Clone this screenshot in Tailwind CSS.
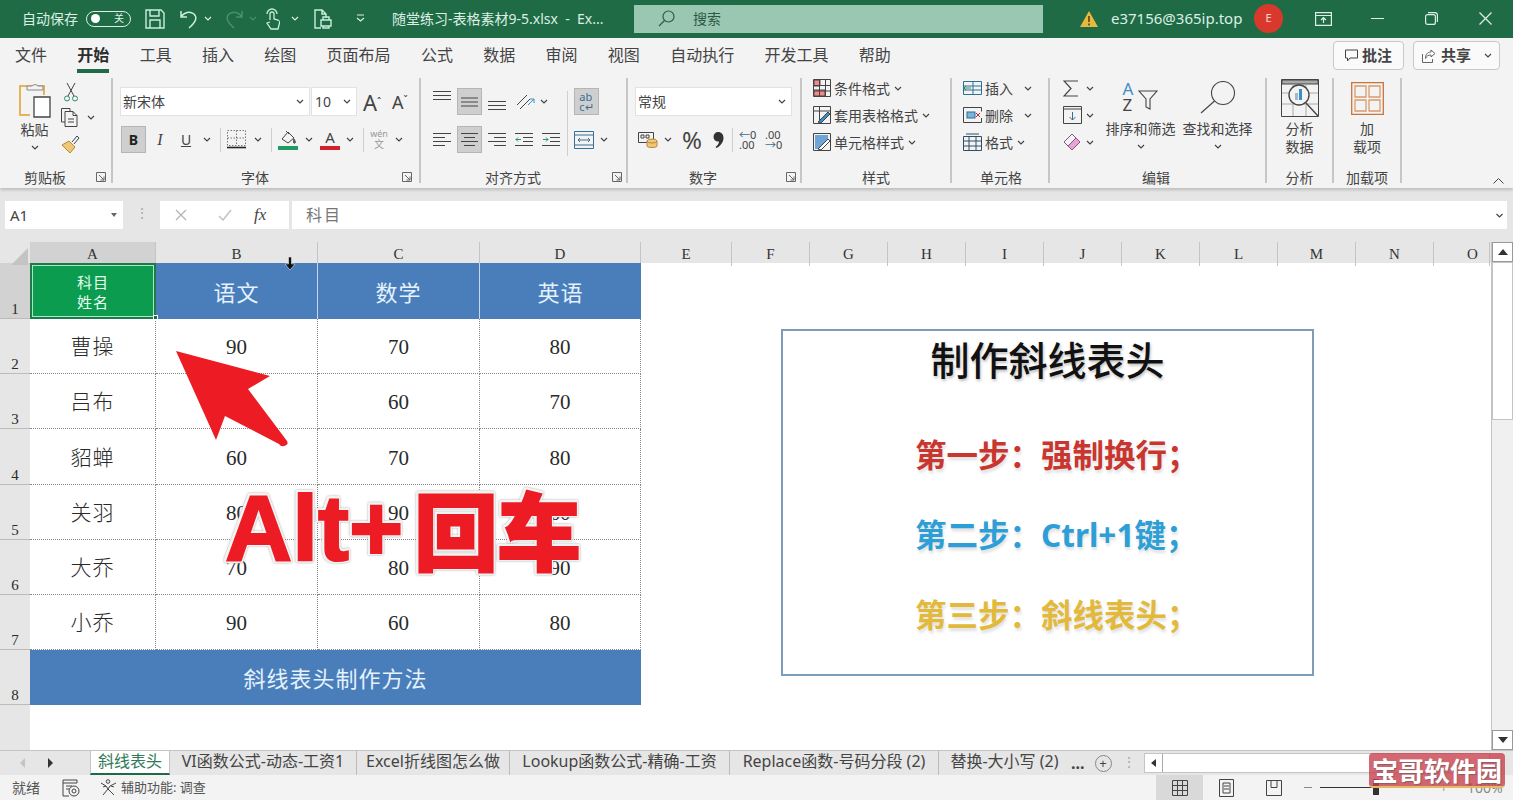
<!DOCTYPE html>
<html lang="zh-CN">
<head>
<meta charset="UTF-8" />
<title>随堂练习-表格素材9-5.xlsx - Excel</title>
<script src="https://cdn.jsdelivr.net/npm/@tailwindcss/browser@4"></script>
</head>
<body class="overflow-hidden bg-white">
<svg class="hidden">
  <symbol id="c" viewBox="0 0 8 5"><path d="M1 1l3 3 3-3" fill="none" stroke="#444" stroke-width="1.2"/></symbol>
  <symbol id="launch" viewBox="0 0 10 10"><path d="M.5 9.500V.5h9v9z M3 3l5 5 M8 4.500V8H4.500" fill="none" stroke="#666"/></symbol>
</svg>

<div class="relative flex h-[800px] w-[1513px] flex-col overflow-hidden bg-[#e6e6e6] font-['Noto_Sans','Noto_Sans_CJK_SC',sans-serif] text-[#444]">

  <!-- title bar -->
  <header class="flex h-[38px] shrink-0 items-center bg-[#1f6b45] pb-[1px] text-[#dcefe5]">
    <span class="ml-[22px] w-[64px] text-[14px]">自动保存</span>
    <span class="flex h-[16px] w-[45px] items-center justify-between rounded-full border border-[#dcefe5] pr-[6px] pl-[4px] text-[10px]"><i class="size-[9px] rounded-full bg-white"></i>关</span>
    <svg class="ml-[14px] size-[20px]" viewBox="0 0 20 20" fill="none" stroke="#c8eedd" stroke-width="1.4"><path d="M1 1h15l3 3v15H1z M5 1v6h9V1 M5 19v-8h10v8"/></svg>
    <svg class="ml-[15px] h-[20px] w-[18px]" viewBox="0 0 18 20" fill="none" stroke="#c8eedd" stroke-width="1.5"><path d="M1 2v6h6 M1 8c3-5 9-6 13-3 3 3 3 7-5 14"/></svg>
    <svg class="ml-[6px] h-[5px] w-[8px]" viewBox="0 0 8 5" fill="none" stroke="#dcefe5" stroke-width="1.2"><path d="M1 1l3 3 3-3"/></svg>
    <svg class="ml-[13px] h-[20px] w-[18px]" viewBox="0 0 18 20" fill="none" stroke="#4b8d6d" stroke-width="1.5"><path d="M17 2v6h-6 M17 8c-3-5-9-6-13-3-3 3-3 7 5 14"/></svg>
    <svg class="ml-[6px] h-[5px] w-[8px]" viewBox="0 0 8 5" fill="none" stroke="#4b8d6d" stroke-width="1.2"><path d="M1 1l3 3 3-3"/></svg>
    <svg class="ml-[8px] h-[22px] w-[16px]" viewBox="0 0 16 22" fill="none" stroke="#c8eedd" stroke-width="1.3"><path d="M5 12V6a2 2 0 0 1 4 0v5l4 1c2 1 2 2 1 5l-1 4H6l-4-6 3-1 M2 6a5 5 0 0 1 10 0"/></svg>
    <svg class="ml-[10px] h-[5px] w-[8px]" viewBox="0 0 8 5" fill="none" stroke="#dcefe5" stroke-width="1.2"><path d="M1 1l3 3 3-3"/></svg>
    <svg class="ml-[15px] h-[20px] w-[18px]" viewBox="0 0 18 20" fill="none" stroke="#c8eedd" stroke-width="1.4"><path d="M7 19H1V1h7l4 4v4 M8 1v4h4 M7 11h10v6H7z M9 11V8h6v3 M9 17v2h6v-2"/></svg>
    <svg class="ml-[24px] h-[9px] w-[9px]" viewBox="0 0 9 9" fill="none" stroke="#dcefe5" stroke-width="1.2"><path d="M1 1h7 M1 4l3.500 3L8 4"/></svg>
    <span class="ml-[27px] w-[242px] text-[14px] whitespace-nowrap">随堂练习-表格素材9-5.xlsx &nbsp;-&nbsp; Ex...</span>
    <div class="flex h-[28px] w-[409px] items-center bg-[#9ac7b1] text-[#2c5a44]">
      <svg class="ml-[24px] size-[17px]" viewBox="0 0 17 17" fill="none" stroke="#2c5a44" stroke-width="1.2"><circle cx="10.500" cy="6.500" r="5.500"/><path d="M6.500 10.500L1 16"/></svg>
      <span class="ml-[18px] text-[14px]">搜索</span>
    </div>
    <svg class="ml-[37px] h-[16px] w-[18px]" viewBox="0 0 18 16"><path d="M9 0l9 16H0z" fill="#e8b93d"/><path d="M9 5v6 M9 12.500v2" stroke="#5a4310" stroke-width="1.6"/></svg>
    <span class="ml-[13px] w-[143px] text-[15px] whitespace-nowrap">e37156@365ip.top</span>
    <span class="flex size-[29px] items-center justify-center rounded-full bg-[#d9392c] text-[11px] text-[#f6d5c8]">E</span>
    <svg class="ml-[32px] h-[14px] w-[17px]" viewBox="0 0 17 14" fill="none" stroke="#dcefe5" stroke-width="1.2"><path d="M.6.600h15.800v12.800H.6z M.6 3.500h15.800 M8.500 11V6 M6 8l2.500-2.500L11 8"/></svg>
    <span class="ml-[39px] h-[1.500px] w-[13px] bg-[#dcefe5]"></span>
    <svg class="ml-[41px] size-[13px]" viewBox="0 0 13 13" fill="none" stroke="#dcefe5" stroke-width="1.200"><rect x=".6" y="2.600" width="9.800" height="9.800" rx="2"/><path d="M3 .6h7a2.500 2.500 0 0 1 2.400 2.400v7"/></svg>
    <svg class="ml-[41px] size-[13px]" viewBox="0 0 13 13" fill="none" stroke="#dcefe5" stroke-width="1.300"><path d="M.5.500l12 12 M12.500.500l-12 12"/></svg>
  </header>

  <!-- ribbon tabs -->
  <nav class="relative flex h-[34px] shrink-0 items-center gap-[30.300px] bg-[#f3f3f3] pl-[15px] text-[16px] text-[#444]">
    <span>文件</span>
    <span class="relative font-bold text-[#2d2d2d]">开始<i class="absolute -bottom-[6px] left-0 h-[4px] w-[32px] bg-[#1f6b45]"></i></span>
    <span>工具</span><span>插入</span><span>绘图</span><span>页面布局</span><span>公式</span><span>数据</span><span>审阅</span><span>视图</span><span>自动执行</span><span>开发工具</span><span>帮助</span>
    <div class="absolute top-[3px] right-[109px] flex h-[29px] w-[71px] items-center justify-center gap-[4px] rounded-[4px] border border-[#c8c8c8] bg-[#fafafa] font-bold text-[15px]">
      <svg class="size-[13px]" viewBox="0 0 13 13" fill="none" stroke="#444" stroke-width="1"><path d="M.5 1h12v8H5l-2.500 3V9h-2z"/></svg>批注
    </div>
    <div class="absolute top-[3px] right-[13px] flex h-[29px] w-[87px] items-center gap-[5px] rounded-[4px] border border-[#c8c8c8] bg-[#fafafa] pl-[8px] font-bold text-[15px]">
      <svg class="size-[14px]" viewBox="0 0 14 14" fill="none" stroke="#666" stroke-width="1"><path d="M9 1l4 3.500L9 8V6C6 6 4.500 7 3.500 9.500 3.500 6 5 3 9 3z M.5 5v8.500h10V10"/></svg>共享
      <svg class="ml-[8px] h-[5px] w-[8px]"><use href="#c"/></svg>
    </div>
  </nav>

  <!-- ribbon -->
  <section class="flex h-[116px] shrink-0 bg-[#f3f3f3] text-[14px] shadow-[0_2px_3px_rgba(0,0,0,.18)]">

    <!-- clipboard -->
    <div class="flex w-[111px] flex-col">
      <div class="flex h-[94px]">
        <div class="ml-[18px] flex w-[33px] flex-col items-center pt-[10px]">
          <svg class="h-[36px] w-[34px]" viewBox="0 0 34 36" fill="none"><path d="M14 4H2v29h10" stroke="#e5b35a" stroke-width="2"/><path d="M14 4h12v9" stroke="#e5b35a" stroke-width="2"/><path d="M9 8V4h5a4 4 0 0 1 6 0h5v4z" stroke="#888" fill="#f3f3f3"/><path d="M16 15h16v20H16z" stroke="#444" fill="#fff" stroke-width="1.300"/></svg>
          <span class="mt-[2px] text-[14px] leading-[20px]">粘贴</span>
          <svg class="mt-[5px] h-[5px] w-[8px]"><use href="#c"/></svg>
        </div>
        <div class="ml-[10px] flex flex-col pt-[10px]">
          <svg class="ml-[3px] h-[20px] w-[14px]" viewBox="0 0 14 20" fill="none" stroke="#444"><path d="M3 1l7 13 M11 1L4 14"/><circle cx="3" cy="16.500" r="2.500" stroke="#2f8f6b"/><circle cx="11" cy="16.500" r="2.500" stroke="#2f8f6b"/></svg>
          <div class="mt-[6px] flex items-center">
            <svg class="h-[19px] w-[20px]" viewBox="0 0 20 19" fill="none" stroke="#444"><path d="M4 14H.5V.5H9v3 M4 3.500h8l4 4v11H4z M12 3.500v4h4 M7 11h6 M7 14h6"/></svg>
            <svg class="ml-[6px] h-[5px] w-[8px]"><use href="#c"/></svg>
          </div>
          <svg class="mt-[7px] h-[20px] w-[20px]" viewBox="0 0 20 20" fill="none"><path d="M1 11l7-4 6 6-5 6z" fill="#f0c677" stroke="#b58a36"/><path d="M11 8l5-6 2 2-5 6" stroke="#444"/></svg>
        </div>
      </div>
      <div class="flex h-[22px] items-center text-[#444]"><span class="ml-[24px] w-[72px]">剪贴板</span><svg class="size-[10px]"><use href="#launch"/></svg></div>
    </div>
    <i class="mt-[6px] h-[105px] w-[2px] bg-[#c6c6c6]"></i>

    <!-- font -->
    <div class="flex w-[306px] flex-col">
      <div class="h-[94px] pt-[16px] pl-[8px]">
        <div class="flex h-[27px] items-center">
          <div class="flex h-[27px] w-[188px] items-center justify-between bg-white pr-[5px] pl-[2px] shadow-[0_0_0_1px_#e2e2e2]">新宋体<svg class="h-[5px] w-[8px]"><use href="#c"/></svg></div>
          <div class="ml-[3px] flex h-[27px] w-[44px] items-center justify-between bg-white pr-[5px] pl-[3px] shadow-[0_0_0_1px_#e2e2e2]">10<svg class="h-[5px] w-[8px]"><use href="#c"/></svg></div>
          <span class="ml-[7px] w-[29px] text-[22px] leading-none">A<sup class="text-[10px]">ˆ</sup></span>
          <span class="w-[20px] text-[18px] leading-none">A<sup class="text-[10px]">ˇ</sup></span>
        </div>
        <div class="mt-[11px] flex h-[27px] items-center">
          <span class="flex h-[27px] w-[25px] items-center justify-center border border-[#b5b5b5] bg-[#cfcfcf] font-bold text-[#222]">B</span>
          <span class="w-[28px] text-center font-['Liberation_Serif'] text-[16px] italic">I</span>
          <span class="w-[24px] text-center underline">U</span>
          <span class="flex w-[18px] justify-center"><svg class="h-[5px] w-[8px]"><use href="#c"/></svg></span>
          <i class="mr-[6px] ml-[4px] h-[24px] w-px bg-[#cfcfcf]"></i>
          <svg class="size-[19px]" viewBox="0 0 19 19" fill="none"><path d="M.5.500h18v15H.5z M9.500.500v15 M.500 8h18" stroke="#777" stroke-dasharray="1.500 1.500"/><path d="M0 17.500h19" stroke="#222" stroke-width="1.600"/></svg>
          <span class="flex w-[21px] justify-center"><svg class="ml-[2px] h-[5px] w-[8px]"><use href="#c"/></svg></span>
          <i class="mr-[6px] ml-[4px] h-[24px] w-px bg-[#cfcfcf]"></i>
          <div class="flex w-[20px] flex-col items-center">
            <svg class="h-[15px] w-[18px]" viewBox="0 0 18 15" fill="none" stroke="#444"><path d="M3 9l6-7 6 6-6 5z M7 1l3 3"/><path d="M15 9c1 2 2 3 1 4s-2 0-1-4" fill="#2f8f6b"/></svg>
            <i class="mt-[1px] h-[4px] w-[20px] bg-[#1f9a63]"></i>
          </div>
          <span class="flex w-[20px] justify-center"><svg class="ml-[2px] h-[5px] w-[8px]"><use href="#c"/></svg></span>
          <div class="ml-[2px] flex w-[20px] flex-col items-center">
            <span class="text-[15px] leading-[15px]">A</span>
            <i class="mt-[1px] h-[4px] w-[20px] bg-[#d0222c]"></i>
          </div>
          <span class="flex w-[20px] justify-center"><svg class="h-[5px] w-[8px]"><use href="#c"/></svg></span>
          <i class="mr-[6px] ml-[3px] h-[24px] w-px bg-[#cfcfcf]"></i>
          <div class="flex w-[18px] flex-col items-center text-[#999]"><span class="text-[9px] leading-[10px]">wén</span><span class="text-[10px] leading-[11px]">文</span></div>
          <span class="flex w-[20px] justify-center"><svg class="ml-[2px] h-[5px] w-[8px]"><use href="#c"/></svg></span>
        </div>
      </div>
      <div class="flex h-[22px] items-center"><span class="ml-[128px] w-[157px]">字体</span><svg class="ml-[4px] size-[10px]"><use href="#launch"/></svg></div>
    </div>
    <i class="mt-[6px] h-[105px] w-[2px] bg-[#c6c6c6]"></i>

    <!-- alignment -->
    <div class="flex w-[205px] flex-col">
      <div class="flex h-[94px] pt-[16px]">
        <div class="w-[146px]">
          <div class="flex h-[27px] items-center pl-[12px]">
            <svg class="h-[14px] w-[18px] self-start mt-[2px]" viewBox="0 0 18 14" stroke="#444"><path d="M0 1.500h18 M0 5.500h18 M0 9.500h18"/></svg>
            <span class="mx-[6px] flex h-[27px] w-[25px] items-center justify-center border border-[#b5b5b5] bg-[#cfcfcf]"><svg class="h-[12px] w-[17px]" viewBox="0 0 17 12" stroke="#444"><path d="M0 2h17 M0 6h17 M0 10h17"/></svg></span>
            <svg class="mt-[4px] h-[14px] w-[18px]" viewBox="0 0 18 14" stroke="#444"><path d="M0 4.500h18 M0 8.500h18 M0 12.500h18"/></svg>
            <svg class="ml-[10px] h-[18px] w-[20px]" viewBox="0 0 20 18" fill="none" stroke="#444"><path d="M1 12L11 2 M4 16L14 6"/><path d="M12 12l6-6 M14 6h4v4" stroke="#3b8fc4"/></svg>
            <svg class="ml-[4px] h-[5px] w-[8px]"><use href="#c"/></svg>
          </div>
          <div class="mt-[11px] flex h-[27px] items-center pl-[12px]">
            <svg class="h-[16px] w-[18px]" viewBox="0 0 18 16" stroke="#444"><path d="M0 1.500h18 M0 5.500h12 M0 9.500h18 M0 13.500h12"/></svg>
            <span class="mx-[6px] flex h-[27px] w-[25px] items-center justify-center border border-[#b5b5b5] bg-[#cfcfcf]"><svg class="h-[16px] w-[17px]" viewBox="0 0 17 16" stroke="#444"><path d="M0 1.500h17 M3 5.500h11 M0 9.500h17 M3 13.500h11"/></svg></span>
            <svg class="h-[16px] w-[18px]" viewBox="0 0 18 16" stroke="#444"><path d="M0 1.500h18 M6 5.500h12 M0 9.500h18 M6 13.500h12"/></svg>
            <svg class="ml-[9px] h-[16px] w-[18px]" viewBox="0 0 18 16" fill="none" stroke="#444"><path d="M0 1.500h18 M8 5.500h10 M8 9.500h10 M0 13.500h18"/><path d="M6 7.500H1 M3 5.500l-2 2 2 2" stroke="#2f8f6b"/></svg>
            <svg class="ml-[9px] h-[16px] w-[18px]" viewBox="0 0 18 16" fill="none" stroke="#444"><path d="M0 1.500h18 M8 5.500h10 M8 9.500h10 M0 13.500h18"/><path d="M1 7.500h5 M4 5.500l2 2-2 2" stroke="#2f8f6b"/></svg>
          </div>
        </div>
        <i class="mt-[3px] h-[65px] w-px bg-[#cfcfcf]"></i>
        <div class="flex flex-col pl-[6px]">
          <span class="flex h-[27px] w-[25px] flex-col items-center justify-center border border-[#b5b5b5] bg-[#cfcfcf] text-[11px] leading-[10px] text-[#3a6f94]">ab<br/>c↵</span>
          <div class="mt-[11px] flex h-[27px] items-center">
            <svg class="h-[18px] w-[20px]" viewBox="0 0 20 18" fill="none" stroke="#3a6f94"><path d="M.5.500h19v17H.5z M.5 4h19 M.5 14h19 M4 9h12 M6 7L4 9l2 2 M14 7l2 2-2 2"/></svg>
            <svg class="ml-[6px] h-[5px] w-[8px]"><use href="#c"/></svg>
          </div>
        </div>
      </div>
      <div class="flex h-[22px] items-center"><span class="ml-[64px] w-[127px]">对齐方式</span><svg class="size-[10px]"><use href="#launch"/></svg></div>
    </div>
    <i class="mt-[6px] h-[105px] w-[2px] bg-[#c6c6c6]"></i>

    <!-- number -->
    <div class="flex w-[172px] flex-col">
      <div class="h-[94px] pt-[16px] pl-[8px]">
        <div class="flex h-[27px] w-[155px] items-center justify-between bg-white pr-[5px] pl-[2px] shadow-[0_0_0_1px_#e2e2e2]">常规<svg class="h-[5px] w-[8px]"><use href="#c"/></svg></div>
        <div class="mt-[11px] flex h-[27px] items-center">
          <svg class="ml-[2px] h-[17px] w-[20px]" viewBox="0 0 20 17" fill="none"><path d="M.5 1.500h15v10H.5z M3 4h3v3H3z M8 4h3v3H8z" stroke="#444"/><path d="M9 10v5c0 2 10 2 10 0v-5" fill="#f0c677" stroke="#b58a36"/><ellipse cx="14" cy="10" rx="5" ry="2" fill="#f0c677" stroke="#b58a36"/></svg>
          <svg class="ml-[6px] h-[5px] w-[8px]"><use href="#c"/></svg>
          <span class="ml-[6px] w-[28px] text-center text-[24px] leading-none">%</span>
          <svg class="ml-[7px] h-[18px] w-[11px]" viewBox="0 0 11 18"><path d="M5 1c3.500 0 5.500 2.500 5.500 6 0 4-3 8-7 10l-1-1c2-1.500 3.500-3.500 3.500-5.500C3 11 .5 9 .5 6 .5 3 2.500 1 5 1z" fill="#333"/></svg>
          <i class="ml-[8px] h-[24px] w-px bg-[#cfcfcf]"></i>
          <div class="ml-[6px] w-[20px] text-[11px] leading-[10px]"><span class="text-[#3a6f94]">←</span>0<br/>.00</div>
          <div class="ml-[6px] w-[22px] text-[11px] leading-[10px]">.00<br/><span class="text-[#3a6f94]">→</span>0</div>
        </div>
      </div>
      <div class="flex h-[22px] items-center"><span class="ml-[61px] w-[97px]">数字</span><svg class="size-[10px]"><use href="#launch"/></svg></div>
    </div>
    <i class="mt-[6px] h-[105px] w-[2px] bg-[#c6c6c6]"></i>

    <!-- styles -->
    <div class="flex w-[148px] flex-col">
      <div class="flex h-[94px] flex-col gap-[9px] pt-[7px] pl-[11px]">
        <div class="flex h-[18px] items-center"><svg class="mr-[3px] size-[18px]" viewBox="0 0 18 18" fill="none" stroke="#444"><path d="M1 1h6v6H1z" fill="#f28a8a"/><path d="M1 11h11v6H1z" fill="#f28a8a"/><path d="M.5.500h17v17H.5z M6.500.500v17 M12.500.500v17 M.5 6.500h17 M.5 12h17"/></svg>条件格式<svg class="ml-[4px] h-[5px] w-[8px]"><use href="#c"/></svg></div>
        <div class="flex h-[18px] items-center"><svg class="mr-[3px] size-[18px]" viewBox="0 0 18 18" fill="none" stroke="#444"><path d="M.5.500h17v17H.5z M.5 5h17 M6.500.500v17"/><path d="M5 16L15 6l2 2L8 17z" fill="#3b8fc4"/></svg>套用表格格式<svg class="ml-[4px] h-[5px] w-[8px]"><use href="#c"/></svg></div>
        <div class="flex h-[18px] items-center"><svg class="mr-[3px] size-[18px]" viewBox="0 0 18 18" fill="none" stroke="#444"><path d="M.5.500h17v17H.5z"/><path d="M2 2h13v7L6 16H2z" fill="#6fa5d6" stroke="none"/><path d="M5 16L15 6l2 2L8 17z" fill="#fff"/></svg>单元格样式<svg class="ml-[4px] h-[5px] w-[8px]"><use href="#c"/></svg></div>
      </div>
      <div class="flex h-[22px] items-center"><span class="ml-[60px]">样式</span></div>
    </div>
    <i class="mt-[6px] h-[105px] w-[2px] bg-[#c6c6c6]"></i>

    <!-- cells -->
    <div class="flex w-[96px] flex-col">
      <div class="flex h-[94px] flex-col gap-[9px] pt-[7px] pl-[11px]">
        <div class="flex h-[18px] items-center"><svg class="mr-[3px] h-[18px] w-[19px]" viewBox="0 0 19 18" fill="none" stroke="#2f6f96"><path d="M.5 2.500h18v13H.5z M.5 7h18 M.5 11h18 M10 2.500v13"/><path d="M1 9h7 M3 7L1 9l2 2" stroke="#2f8f6b"/></svg>插入<svg class="ml-[11px] h-[5px] w-[8px]"><use href="#c"/></svg></div>
        <div class="flex h-[18px] items-center"><svg class="mr-[3px] h-[18px] w-[19px]" viewBox="0 0 19 18" fill="none" stroke="#444"><path d="M.5 1.500h18 M.5 16.500h18 M.5 1.500v15 M18.500 1.500v4 M18.500 12v4.500"/><rect x="4" y="6" width="8" height="6" fill="#7fb2d9" stroke="#2f6f96"/><path d="M13 7l4 4 M17 7l-4 4" stroke="#d0222c"/></svg>删除<svg class="ml-[11px] h-[5px] w-[8px]"><use href="#c"/></svg></div>
        <div class="flex h-[18px] items-center"><svg class="mr-[3px] h-[18px] w-[19px]" viewBox="0 0 19 18" fill="none" stroke="#2f4f66"><path d="M.5 3.500h18v14H.5z M.5 8h18 M.5 13h18 M6 3.500v14 M13 3.500v14 M3 1h13"/></svg>格式<svg class="ml-[4px] h-[5px] w-[8px]"><use href="#c"/></svg></div>
      </div>
      <div class="flex h-[22px] items-center"><span class="ml-[28px]">单元格</span></div>
    </div>
    <i class="mt-[6px] h-[105px] w-[2px] bg-[#c6c6c6]"></i>

    <!-- editing -->
    <div class="flex w-[215px] flex-col">
      <div class="flex h-[94px]">
        <div class="flex w-[52px] flex-col gap-[9px] pt-[7px] pl-[13px]">
          <div class="flex h-[18px] items-center"><svg class="h-[17px] w-[15px]" viewBox="0 0 15 17" fill="none" stroke="#444" stroke-width="1.200"><path d="M15 1H1l7 7.500L1 16h14"/></svg><svg class="ml-[8px] h-[5px] w-[8px]"><use href="#c"/></svg></div>
          <div class="flex h-[18px] items-center"><svg class="h-[18px] w-[19px]" viewBox="0 0 19 18" fill="none" stroke="#444"><path d="M.5.500h18v17H.5z M.5 3h18"/><path d="M9.500 6v8 M6.500 11l3 3 3-3" stroke="#2f6f96"/></svg><svg class="ml-[4px] h-[5px] w-[8px]"><use href="#c"/></svg></div>
          <div class="flex h-[18px] items-center"><svg class="h-[18px] w-[18px]" viewBox="0 0 18 18" fill="none" stroke="#8a4f8f"><path d="M1 9l8-8 8 8-8 8z"/><path d="M5 13l4 4 8-8-4-4z" fill="#e7a6cf"/></svg><svg class="ml-[5px] h-[5px] w-[8px]"><use href="#c"/></svg></div>
        </div>
        <div class="flex w-[77px] flex-col items-center pt-[9px]">
          <div class="relative flex h-[32px] w-[36px]">
            <span class="absolute -top-[1px] left-0 text-[17px] leading-none text-[#3b8fc4]">A</span>
            <span class="absolute top-[15px] left-0 text-[17px] leading-none">Z</span>
            <svg class="absolute top-[9px] left-[15px] h-[20px] w-[20px]" viewBox="0 0 20 20" fill="none" stroke="#444" stroke-width="1.100"><path d="M1 1h18l-7 8v10l-4-2V9z"/></svg>
          </div>
          <span class="mt-[6px] leading-[20px] whitespace-nowrap">排序和筛选</span>
          <svg class="mt-[5px] h-[5px] w-[8px]"><use href="#c"/></svg>
        </div>
        <div class="flex w-[77px] flex-col items-center pt-[9px]">
          <svg class="h-[33px] w-[36px]" viewBox="0 0 36 33" fill="none" stroke="#444" stroke-width="1.100"><circle cx="23" cy="12" r="11.500"/><path d="M14.500 20L1 32"/></svg>
          <span class="mt-[5px] leading-[20px] whitespace-nowrap">查找和选择</span>
          <svg class="mt-[5px] h-[5px] w-[8px]"><use href="#c"/></svg>
        </div>
      </div>
      <div class="flex h-[22px] items-center"><span class="ml-[92px]">编辑</span></div>
    </div>
    <i class="mt-[6px] h-[105px] w-[2px] bg-[#c6c6c6]"></i>

    <!-- analysis -->
    <div class="flex w-[65px] flex-col">
      <div class="flex h-[94px] flex-col items-center pt-[7px]">
        <svg class="h-[38px] w-[38px]" viewBox="0 0 38 38" fill="none" stroke="#444"><path d="M.5.500h37v37H.5z"/><path d="M1 1h36v4H1z" fill="#aaa"/><path d="M1 14h36 M1 25h36 M12 5v32 M25 5v32" stroke="#aaa"/><circle cx="18" cy="16" r="10" fill="#f3f3f3" stroke-width="1.400"/><path d="M14 14h3v7h-3z" fill="#9bbbd4" stroke="none"/><path d="M18 10h3v11h-3z" fill="#3b8fc4" stroke="none"/><path d="M25 24l12 13" stroke-width="1.400"/></svg>
        <span class="mt-[3px] leading-[18px]">分析</span><span class="leading-[18px]">数据</span>
      </div>
      <div class="flex h-[22px] items-center justify-center">分析</div>
    </div>
    <i class="mt-[6px] h-[105px] w-[2px] bg-[#c6c6c6]"></i>

    <!-- add-ins -->
    <div class="flex w-[66px] flex-col">
      <div class="flex h-[94px] flex-col items-center pt-[10px]">
        <svg class="h-[33px] w-[33px]" viewBox="0 0 33 33" fill="none" stroke="#c8733a" stroke-width="1.300"><path d="M.7.700h31.600v31.600H.7z"/><path d="M4 4h11v11H4z M18 4h11v11H18z M4 18h11v11H4z M18 18h11v11H18z" stroke="#d99a6c"/></svg>
        <span class="mt-[5px] leading-[18px]">加</span><span class="leading-[18px]">载项</span>
      </div>
      <div class="flex h-[22px] items-center justify-center">加载项</div>
    </div>
    <i class="mt-[6px] h-[105px] w-[2px] bg-[#c6c6c6]"></i>

    <div class="flex flex-1 items-end justify-end pr-[9px] pb-[4px]">
      <svg class="h-[6px] w-[11px]" viewBox="0 0 11 6" fill="none" stroke="#444"><path d="M.5 5.500l5-5 5 5"/></svg>
    </div>
  </section>

  <!-- formula bar -->
  <div class="flex h-[54px] shrink-0 items-start pt-[13px]">
    <div class="ml-[5px] flex h-[28px] w-[118px] items-center justify-between bg-white pr-[6px] pl-[5px] text-[15px]">A1<i class="border-x-[3px] border-t-[4px] border-x-transparent border-t-[#666]"></i></div>
    <span class="w-[37px] text-center text-[14px] leading-[24px] text-[#aaa]">⋮</span>
    <div class="flex h-[28px] w-[129px] items-center bg-white pl-[15px]">
      <svg class="size-[12px]" viewBox="0 0 12 12" stroke="#b5b5b5" stroke-width="1.300"><path d="M1 1l10 10 M11 1L1 11"/></svg>
      <svg class="ml-[31px] h-[12px] w-[14px]" viewBox="0 0 14 12" fill="none" stroke="#c5c5c5" stroke-width="1.600"><path d="M1 7l4 4 8-10"/></svg>
      <span class="ml-[22px] font-['Liberation_Serif'] text-[17px] italic">fx</span>
    </div>
    <div class="ml-[3px] flex h-[28px] w-[1215px] items-center justify-between bg-white pr-[3px] pl-[14px] text-[16px] tracking-[2px] text-[#777]">科目<svg class="h-[5px] w-[9px]"><use href="#c"/></svg></div>
  </div>

  <!-- sheet + vertical scrollbar -->
  <div class="flex h-[508px] shrink-0">
    <div class="flex w-[1491px] flex-col bg-white">
      <div class="grid h-[21px] shrink-0 grid-cols-[30px_126px_162px_162px_161px_91px_78px_78px_78px_78px_78px_78px_78px_78px_78px_56px] bg-[#e6e6e6] font-['Liberation_Serif'] text-[15px] leading-[24px] text-[#333] [&>span]:border-r [&>span]:border-[#c4c4c4] [&>span]:text-center">
        <div class="relative"><i class="absolute right-[2px] bottom-[1px] border-b-[17px] border-l-[17px] border-b-[#c4c4c4] border-l-transparent"></i></div>
        <span class="bg-[#d2d2d2]">A</span><span>B</span><span>C</span><span>D</span><span>E</span><span>F</span><span>G</span><span>H</span><span>I</span><span>J</span><span>K</span><span>L</span><span>M</span><span>N</span><span class="pl-[22px]">O</span>
      </div>
      <div class="grid flex-1 grid-cols-[30px_126px_162px_162px_161px_1fr] grid-rows-[56px_55px_55px_55.500px_55.500px_55px_55px_55px_1fr] text-[21px] font-['Liberation_Serif','Noto_Sans_CJK_SC',sans-serif] text-[#2a2a2a] [&>div]:pt-[4px]">
        <!-- row 1 -->
        <div class="flex items-end justify-center border-b border-[#bbb] bg-[#d2d2d2] text-[15px] leading-[18px]">1</div>
        <div class="flex flex-col items-center justify-center border-2 border-[#1f7a4b] bg-[#0b9c50] text-[15px] leading-[20px] tracking-[1px] text-[#e8fff1] shadow-[inset_0_0_0_1px_#a8e6c4]">科目<br/>姓名</div>
        <div class="flex items-center justify-center border-r border-white/70 bg-[#4a7ebb] text-[22px] tracking-[1px] text-[#e4f2fb]">语文</div>
        <div class="flex items-center justify-center border-r border-white/70 bg-[#4a7ebb] text-[22px] tracking-[1px] text-[#e4f2fb]">数学</div>
        <div class="flex items-center justify-center bg-[#4a7ebb] text-[22px] tracking-[1px] text-[#e4f2fb]">英语</div>
        <div></div>
        <!-- row 2 -->
        <div class="flex items-end justify-center border-b border-[#bbb] bg-[#e6e6e6] text-[15px] leading-[18px]">2</div>
        <div class="flex items-center justify-center border-r border-b border-dotted border-[#888] font-light tracking-[1px]">曹操</div>
        <div class="flex items-center justify-center border-r border-b border-dotted border-[#888]">90</div>
        <div class="flex items-center justify-center border-r border-b border-dotted border-[#888]">70</div>
        <div class="flex items-center justify-center border-r border-b border-dotted border-[#888]">80</div>
        <div></div>
        <!-- row 3 -->
        <div class="flex items-end justify-center border-b border-[#bbb] bg-[#e6e6e6] text-[15px] leading-[18px]">3</div>
        <div class="flex items-center justify-center border-r border-b border-dotted border-[#888] font-light tracking-[1px]">吕布</div>
        <div class="flex items-center justify-center border-r border-b border-dotted border-[#888]"></div>
        <div class="flex items-center justify-center border-r border-b border-dotted border-[#888]">60</div>
        <div class="flex items-center justify-center border-r border-b border-dotted border-[#888]">70</div>
        <div></div>
        <!-- row 4 -->
        <div class="flex items-end justify-center border-b border-[#bbb] bg-[#e6e6e6] text-[15px] leading-[18px]">4</div>
        <div class="flex items-center justify-center border-r border-b border-dotted border-[#888] font-light tracking-[1px]">貂蝉</div>
        <div class="flex items-center justify-center border-r border-b border-dotted border-[#888]">60</div>
        <div class="flex items-center justify-center border-r border-b border-dotted border-[#888]">70</div>
        <div class="flex items-center justify-center border-r border-b border-dotted border-[#888]">80</div>
        <div></div>
        <!-- row 5 -->
        <div class="flex items-end justify-center border-b border-[#bbb] bg-[#e6e6e6] text-[15px] leading-[18px]">5</div>
        <div class="flex items-center justify-center border-r border-b border-dotted border-[#888] font-light tracking-[1px]">关羽</div>
        <div class="flex items-center justify-center border-r border-b border-dotted border-[#888]">80</div>
        <div class="flex items-center justify-center border-r border-b border-dotted border-[#888]">90</div>
        <div class="flex items-center justify-center border-r border-b border-dotted border-[#888]">60</div>
        <div></div>
        <!-- row 6 -->
        <div class="flex items-end justify-center border-b border-[#bbb] bg-[#e6e6e6] text-[15px] leading-[18px]">6</div>
        <div class="flex items-center justify-center border-r border-b border-dotted border-[#888] font-light tracking-[1px]">大乔</div>
        <div class="flex items-center justify-center border-r border-b border-dotted border-[#888]">70</div>
        <div class="flex items-center justify-center border-r border-b border-dotted border-[#888]">80</div>
        <div class="flex items-center justify-center border-r border-b border-dotted border-[#888]">90</div>
        <div></div>
        <!-- row 7 -->
        <div class="flex items-end justify-center border-b border-[#bbb] bg-[#e6e6e6] text-[15px] leading-[18px]">7</div>
        <div class="flex items-center justify-center border-r border-b border-dotted border-[#888] font-light tracking-[1px]">小乔</div>
        <div class="flex items-center justify-center border-r border-b border-dotted border-[#888]">90</div>
        <div class="flex items-center justify-center border-r border-b border-dotted border-[#888]">60</div>
        <div class="flex items-center justify-center border-r border-b border-dotted border-[#888]">80</div>
        <div></div>
        <!-- row 8 -->
        <div class="flex items-end justify-center border-b border-[#bbb] bg-[#e6e6e6] text-[15px] leading-[18px]">8</div>
        <div class="col-span-4 flex items-center justify-center bg-[#4a7ebb] text-[22px] tracking-[1px] text-[#e4f2fb]">斜线表头制作方法</div>
        <div></div>
        <!-- row 9 -->
        <div class="bg-[#e6e6e6]"></div>
        <div class="col-span-5"></div>
      </div>
    </div>
    <div class="flex w-[22px] flex-col border-l border-[#c4c4c4] bg-[#f0f0f0]">
      <div class="flex h-[20px] items-center justify-center border border-[#999] bg-white"><i class="border-x-[5px] border-b-[6px] border-x-transparent border-b-[#333]"></i></div>
      <div class="h-[158px] border border-[#c4c4c4] bg-white"></div>
      <div class="flex-1"></div>
      <div class="flex h-[20px] items-center justify-center border border-[#999] bg-white"><i class="border-x-[5px] border-t-[6px] border-x-transparent border-t-[#333]"></i></div>
    </div>
  </div>

  <!-- sheet tabs -->
  <div class="flex h-[25px] shrink-0 items-stretch border-t border-[#c4c4c4] bg-[#e6e6e6] text-[16px] text-[#444]">
    <div class="flex w-[90px] items-center pl-[20px]">
      <i class="border-y-[5px] border-r-[5px] border-y-transparent border-r-[#c4c4c4]"></i>
      <i class="ml-[23px] border-y-[5px] border-l-[5px] border-y-transparent border-l-[#333]"></i>
    </div>
    <div class="flex w-[80px] items-center justify-center border-x border-b-2 border-[#c4c4c4] border-b-[#1f6b45] bg-white pb-[3px] text-[#2f7a58]">斜线表头</div>
    <div class="flex w-[187px] items-center justify-center whitespace-nowrap border-r border-[#bbb] pb-[5px]">VI函数公式-动态-工资1</div>
    <div class="flex w-[153px] items-center justify-center whitespace-nowrap border-r border-[#bbb] pb-[5px]">Excel折线图怎么做</div>
    <div class="flex w-[220px] items-center justify-center whitespace-nowrap border-r border-[#bbb] pb-[5px]">Lookup函数公式-精确-工资</div>
    <div class="flex w-[209px] items-center justify-center whitespace-nowrap border-r border-[#bbb] pb-[5px]">Replace函数-号码分段 (2)</div>
    <div class="flex w-[131px] items-center justify-center whitespace-nowrap pb-[5px]">替换-大小写 (2)</div>
    <span class="ml-[1px] font-bold">...</span>
    <div class="ml-[10px] flex items-center"><span class="flex size-[17px] items-center justify-center rounded-full border border-[#888] text-[13px] leading-none">+</span></div>
    <span class="ml-[10px] text-[14px] leading-[22px] text-[#aaa]">⋮</span>
    <div class="mt-[2px] mr-[23px] ml-auto flex h-[20px] w-[346px] border border-[#c4c4c4] bg-white">
      <span class="flex w-[18px] items-center justify-center border-r border-[#aaa]"><i class="border-y-[4px] border-r-[5px] border-y-transparent border-r-[#333]"></i></span>
      <span class="flex-1"></span>
      <span class="flex w-[18px] items-center justify-center"><i class="border-y-[4px] border-l-[5px] border-y-transparent border-l-[#333]"></i></span>
    </div>
  </div>

  <!-- status bar -->
  <footer class="flex h-[25px] shrink-0 items-center bg-[#f3f3f3] text-[14px] text-[#555]">
    <span class="ml-[12px] w-[50px]">就绪</span>
    <svg class="size-[18px]" viewBox="0 0 18 18" fill="none" stroke="#444"><path d="M1 1h14v3H1z M1 4v13h6 M4 7h6 M4 10h3"/><circle cx="12" cy="12" r="5"/><circle cx="12" cy="12" r="2"/></svg>
    <svg class="ml-[20px] size-[17px]" viewBox="0 0 17 17" fill="none" stroke="#444"><circle cx="8" cy="2.500" r="1.800"/><path d="M1 4l5 3 2 3 2-3 6-3 M8 10l-5 6 M8 10l6 6 M6 7L3 8 M11 7l3 1"/></svg>
    <span class="ml-[4px] text-[13px]">辅助功能: 调查</span>
    <div class="ml-auto flex h-full items-center">
      <span class="flex h-full w-[47px] items-center justify-center bg-[#d9d9d9]"><svg class="size-[16px]" viewBox="0 0 16 16" fill="none" stroke="#444"><path d="M.5.500h15v15H.5z M5.500.500v15 M10.500.500v15 M.5 5.500h15 M.5 10.500h15"/></svg></span>
      <span class="flex w-[47px] justify-center"><svg class="h-[18px] w-[15px]" viewBox="0 0 15 18" fill="none" stroke="#444"><path d="M.5.500h14v17H.5z M4 4h7v10H4z M5 7h5 M5 10h5"/></svg></span>
      <span class="flex w-[47px] justify-center"><svg class="h-[16px] w-[16px]" viewBox="0 0 16 16" fill="none" stroke="#444"><path d="M.5.500h15v15H.5z M5 .5v7h6v-7"/></svg></span>
      <span class="ml-[7px] h-px w-[8px] bg-[#888]"></span>
      <div class="relative ml-[8px] h-px w-[115px] bg-[#333]"><i class="absolute -top-[8px] left-[53px] h-[16px] w-[6px] bg-[#333]"></i></div>
      <span class="ml-[5px] w-[8px] text-[13px] text-[#999]">+</span>
      <span class="mr-[10px] ml-[19px] w-[36px] text-[14px] text-[#888]">100%</span>
    </div>
  </footer>

  <!-- column resize cursor in the header -->
  <svg class="absolute top-[257px] left-[285px] h-[13px] w-[10px]" viewBox="0 0 10 13"><path d="M3.500 0h3v7H10l-5 6-5-6h3.500z" fill="#111" stroke="#fff" stroke-width=".5"/></svg>
  <!-- fill handle -->
  <i class="absolute top-[315px] left-[153px] size-[5px] border border-white bg-[#1f6b45]"></i>

  <!-- text box on the sheet -->
  <div class="absolute top-[329px] left-[781px] h-[347px] w-[533px] border-2 border-[#7f9db9] bg-white">
    <p class="mt-[2px] text-center font-['Noto_Sans_CJK_SC'] text-[39px] leading-[50px] font-medium text-[#111] [text-shadow:1px_2px_3px_rgba(0,0,0,.25)]">制作斜线表头</p>
    <div class="mt-[57px] ml-[132px] flex flex-col gap-[50px] font-['Noto_Sans','Noto_Sans_CJK_SC',sans-serif] text-[31.500px] leading-[30px] font-bold [text-shadow:1px_3px_3px_rgba(0,0,0,.12)]">
      <p class="text-[#c9352f] whitespace-nowrap">第一步：强制换行；</p>
      <p class="text-[#2e9fd6] whitespace-nowrap">第二步：Ctrl+1键；</p>
      <p class="text-[#e2b93b] whitespace-nowrap">第三步：斜线表头；</p>
    </div>
  </div>

  <!-- red arrow overlay -->
  <svg class="absolute top-[345px] left-[170px] h-[110px] w-[125px]" viewBox="170 345 125 110"><path d="M176 351L270 376 248 389 287 441Q289 445 284 446 281 447 279 444L225 416 216 440z" fill="#ed1c24"/></svg>

  <!-- big caption overlay -->
  <div class="absolute top-[483px] left-[225px] flex h-[90px] items-center font-black text-[#ed1c24] [-webkit-text-stroke:2px_#ed1c24] [filter:drop-shadow(1.500px_0_0_#f4f4f4)_drop-shadow(-1.500px_0_0_#f4f4f4)_drop-shadow(0_1.500px_0_#f4f4f4)_drop-shadow(0_-1.500px_0_#f4f4f4)_drop-shadow(0_0_1px_#aaa)]">
    <span class="w-[189px] font-['Liberation_Sans'] text-[93px] leading-none font-bold">Alt+</span>
    <span class="font-['Noto_Sans_CJK_SC'] text-[84px] leading-none tracking-[-1px]">回车</span>
  </div>

  <!-- watermark -->
  <div class="absolute top-[753px] left-[1369px] flex h-[35px] w-[136px] items-center justify-center rounded-[4px] border-b-2 border-[#e8b860] bg-[#c8414f]/80 font-['Noto_Sans_CJK_SC'] text-[26px] font-bold whitespace-nowrap text-white [text-shadow:1px_1px_1px_rgba(90,90,90,.6)]">宝哥软件园</div>
</div>
</body>
</html>
